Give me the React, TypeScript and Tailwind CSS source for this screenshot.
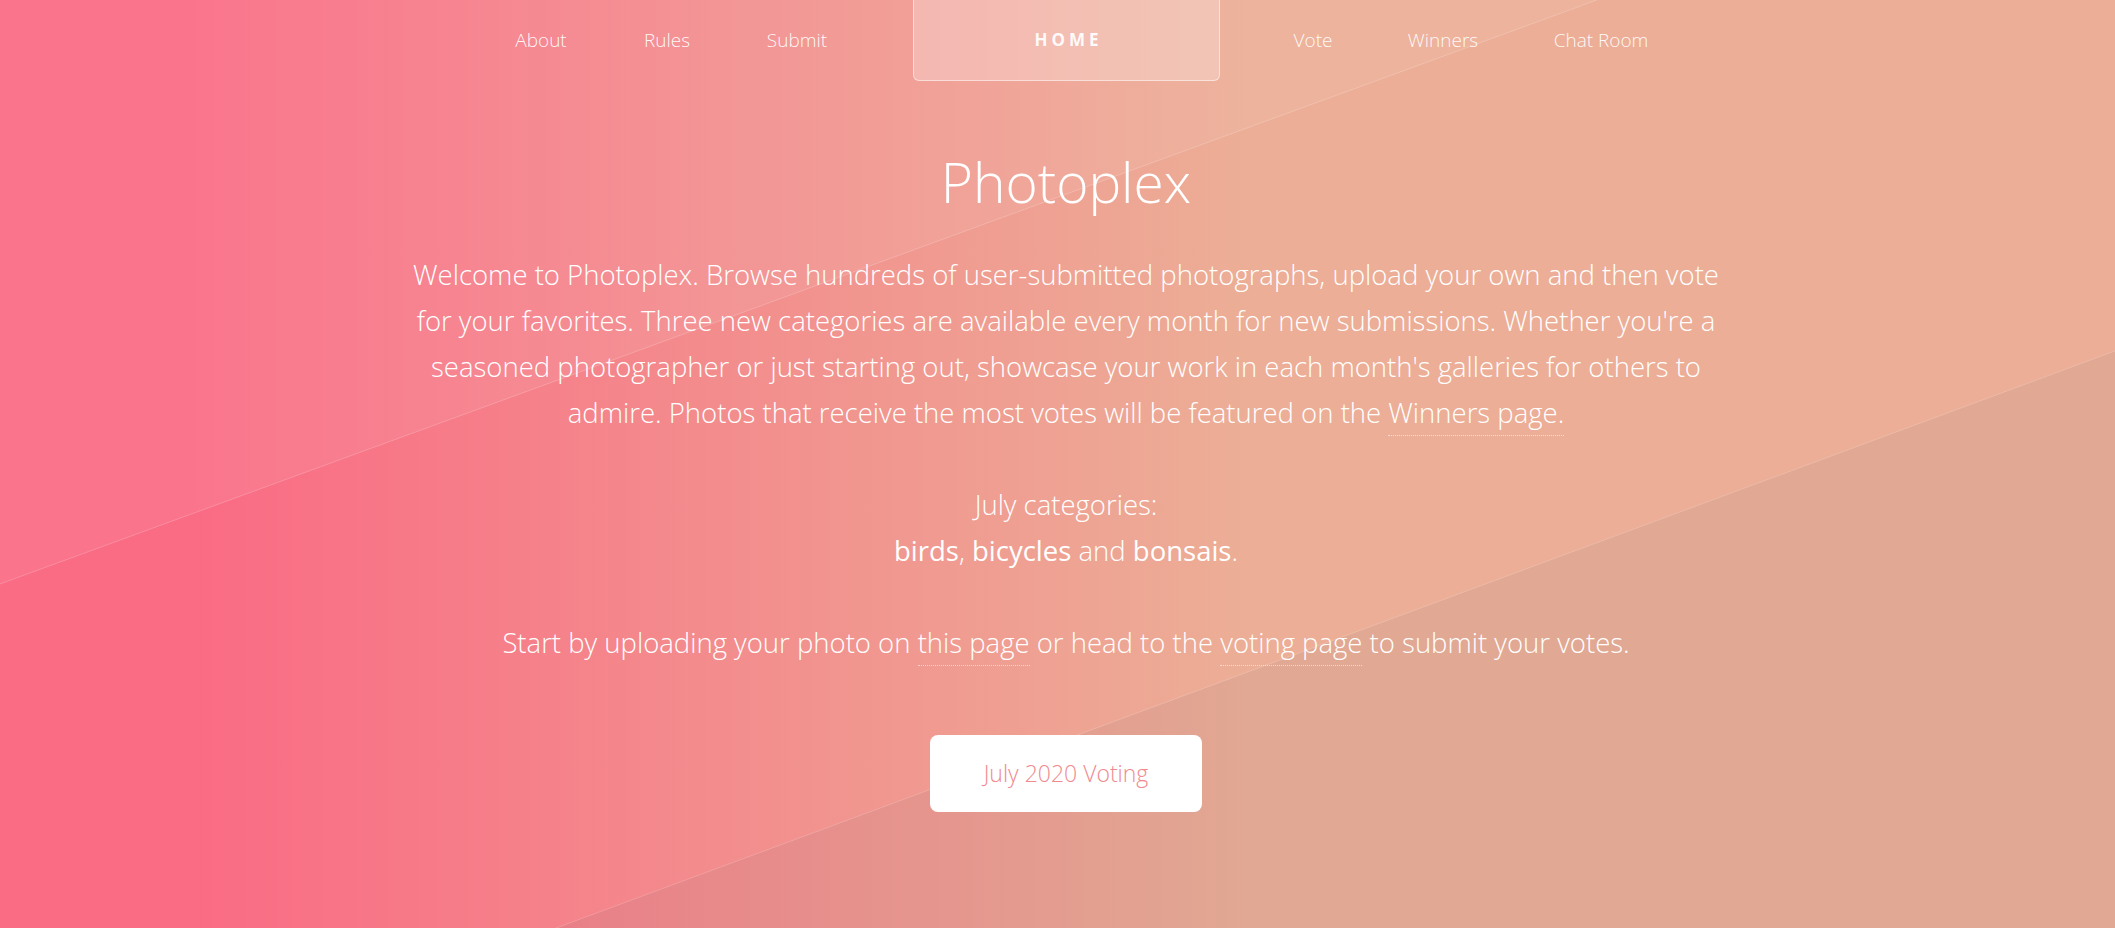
export default function App() {
  const navLeft = [
    { label: "About", w: "w-[126px]" },
    { label: "Rules", w: "w-[126px]" },
    { label: "Submit", w: "w-[134px]" },
  ];
  return (
    <div className="relative h-[928px] w-full overflow-hidden bg-[linear-gradient(90deg,#fa6b84_9%,#ecae96_59%)] font-['Open_Sans',sans-serif] font-light text-white">
      <svg
        className="absolute inset-0 h-full w-full"
        viewBox="0 0 2115 928"
        preserveAspectRatio="none"
      >
        <polygon points="0,0 1597,0 0,584" fill="#ffffff" fillOpacity="0.07" />
        <line x1="0" y1="584" x2="1597" y2="0" stroke="#ffffff" strokeOpacity="0.2" strokeWidth="1" />
        <polygon points="2115,351 2115,928 556,928" fill="rgb(100,100,120)" fillOpacity="0.08" />
        <line x1="556" y1="928" x2="2115" y2="351" stroke="#ffffff" strokeOpacity="0.18" strokeWidth="1" />
      </svg>

      <div className="relative">
        <nav className="flex h-[81px] items-start pl-[478px] text-[19px] text-white/95">
          {navLeft.map((n) => (
            <a key={n.label} className={`${n.w} flex h-[81px] items-center justify-center`}>
              {n.label}
            </a>
          ))}
          <a className="ml-[49px] flex h-[81px] w-[307px] items-center justify-center rounded-b-md border border-t-0 border-white/50 bg-white/25 pl-[4px] text-[17px] font-bold tracking-[4px]">
            HOME
          </a>
          <a className="flex h-[81px] w-[186px] items-center justify-center">Vote</a>
          <a className="flex h-[81px] w-[74px] items-center justify-center">Winners</a>
          <a className="flex h-[81px] w-[242px] items-center justify-center">Chat Room</a>
        </nav>

        <main className="flex flex-col items-center pl-[17px]">
          <h1 className="mt-[73px] text-[55px] font-light leading-none">Photoplex</h1>
          <div className="mt-[43px] text-center text-[27.5px] leading-[46px]">
            <p>
              Welcome to Photoplex. Browse hundreds of user-submitted photographs, upload your own and then vote
              <br />
              for your favorites. Three new categories are available every month for new submissions. Whether you're a
              <br />
              seasoned photographer or just starting out, showcase your work in each month's galleries for others to
              <br />
              admire. Photos that receive the most votes will be featured on the{" "}
              <a className="border-b border-dotted border-white/60 pb-[4px]">Winners page.</a>
            </p>
            <p className="mt-[46px]">
              July categories:
              <br />
              <strong className="font-medium">birds</strong>, <strong className="font-medium">bicycles</strong> and{" "}
              <strong className="font-medium">bonsais</strong>.
            </p>
            <p className="mt-[46px]">
              Start by uploading your photo on{" "}
              <a className="border-b border-dotted border-white/60 pb-[4px]">this page</a> or head to the{" "}
              <a className="border-b border-dotted border-white/60 pb-[4px]">voting page</a> to submit your votes.
            </p>
          </div>
          <a className="mt-[69px] flex h-[77px] w-[272px] items-center justify-center rounded-lg bg-white text-[23px] font-light text-[#f08a8f]">
            July 2020 Voting
          </a>
        </main>
      </div>
    </div>
  );
}
